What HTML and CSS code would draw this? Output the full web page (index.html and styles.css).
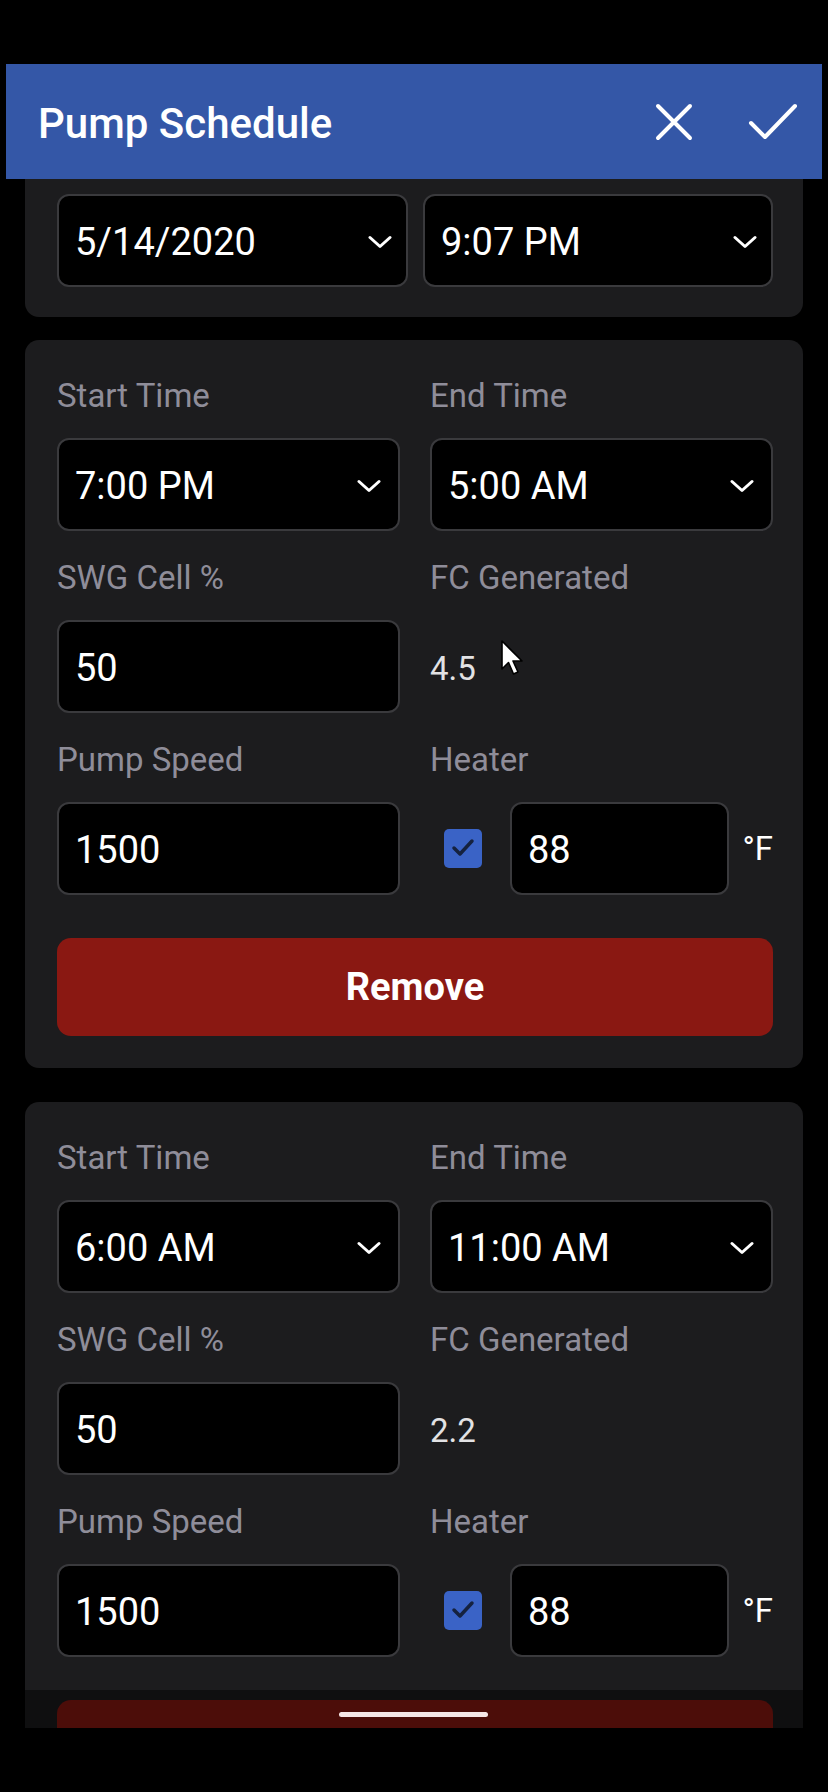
FILE: index.html
```html
<!DOCTYPE html>
<html lang="en">
<head>
    <meta charset="UTF-8">
    <title>Pump Schedule</title>
    <link rel="stylesheet" href="styles.css">
</head>
<body>
    <div class="screen">
        <header class="appbar">
            <h1>Pump Schedule</h1>
            <div class="actions">
                <svg class="icon-close" width="40" height="40" viewBox="0 0 40 40">
                    <path d="M4 4 L36 36 M36 4 L4 36" stroke="#fff" stroke-width="4" stroke-linecap="round" fill="none"/>
                </svg>
                <svg class="icon-check" width="50" height="40" viewBox="0 0 50 40">
                    <path d="M3 21 L17 35 L47 4" stroke="#fff" stroke-width="4" stroke-linecap="round" stroke-linejoin="round" fill="none"/>
                </svg>
            </div>
        </header>

        <main class="scroller">
            <section class="card card-cut">
                <div class="pair">
                    <div class="box select">
                        <span>5/14/2020</span>
                        <svg class="chevron" width="24" height="14" viewBox="0 0 24 14"><path d="M2 2.5 L12 11.5 L22 2.5" stroke="#fff" stroke-width="3" stroke-linecap="round" stroke-linejoin="round" fill="none"/></svg>
                    </div>
                    <div class="box select">
                        <span>9:07 PM</span>
                        <svg class="chevron" width="24" height="14" viewBox="0 0 24 14"><path d="M2 2.5 L12 11.5 L22 2.5" stroke="#fff" stroke-width="3" stroke-linecap="round" stroke-linejoin="round" fill="none"/></svg>
                    </div>
                </div>
            </section>

            <section class="card">
                <div class="fields">
                    <div class="field">
                        <label>Start Time</label>
                        <div class="box select">
                            <span>7:00 PM</span>
                            <svg class="chevron" width="24" height="14" viewBox="0 0 24 14"><path d="M2 2.5 L12 11.5 L22 2.5" stroke="#fff" stroke-width="3" stroke-linecap="round" stroke-linejoin="round" fill="none"/></svg>
                        </div>
                    </div>
                    <div class="field">
                        <label>End Time</label>
                        <div class="box select">
                            <span>5:00 AM</span>
                            <svg class="chevron" width="24" height="14" viewBox="0 0 24 14"><path d="M2 2.5 L12 11.5 L22 2.5" stroke="#fff" stroke-width="3" stroke-linecap="round" stroke-linejoin="round" fill="none"/></svg>
                        </div>
                    </div>
                    <div class="field">
                        <label>SWG Cell %</label>
                        <div class="box">50</div>
                    </div>
                    <div class="field">
                        <label>FC Generated</label>
                        <div class="readout">4.5</div>
                    </div>
                    <div class="field">
                        <label>Pump Speed</label>
                        <div class="box">1500</div>
                    </div>
                    <div class="field">
                        <label>Heater</label>
                        <div class="heater">
                            <span class="checkbox">
                                <svg width="38" height="38" viewBox="0 0 38 38"><path d="M10 19 L16 25 L28 12" stroke="#15223f" stroke-width="3.5" stroke-linecap="round" stroke-linejoin="round" fill="none"/></svg>
                            </span>
                            <div class="box temp">88</div>
                            <span class="unit">°F</span>
                        </div>
                    </div>
                </div>
                <button class="remove" type="button">Remove</button>
            </section>

            <section class="card">
                <div class="fields">
                    <div class="field">
                        <label>Start Time</label>
                        <div class="box select">
                            <span>6:00 AM</span>
                            <svg class="chevron" width="24" height="14" viewBox="0 0 24 14"><path d="M2 2.5 L12 11.5 L22 2.5" stroke="#fff" stroke-width="3" stroke-linecap="round" stroke-linejoin="round" fill="none"/></svg>
                        </div>
                    </div>
                    <div class="field">
                        <label>End Time</label>
                        <div class="box select">
                            <span>11:00 AM</span>
                            <svg class="chevron" width="24" height="14" viewBox="0 0 24 14"><path d="M2 2.5 L12 11.5 L22 2.5" stroke="#fff" stroke-width="3" stroke-linecap="round" stroke-linejoin="round" fill="none"/></svg>
                        </div>
                    </div>
                    <div class="field">
                        <label>SWG Cell %</label>
                        <div class="box">50</div>
                    </div>
                    <div class="field">
                        <label>FC Generated</label>
                        <div class="readout">2.2</div>
                    </div>
                    <div class="field">
                        <label>Pump Speed</label>
                        <div class="box">1500</div>
                    </div>
                    <div class="field">
                        <label>Heater</label>
                        <div class="heater">
                            <span class="checkbox">
                                <svg width="38" height="38" viewBox="0 0 38 38"><path d="M10 19 L16 25 L28 12" stroke="#15223f" stroke-width="3.5" stroke-linecap="round" stroke-linejoin="round" fill="none"/></svg>
                            </span>
                            <div class="box temp">88</div>
                            <span class="unit">°F</span>
                        </div>
                    </div>
                </div>
                <!-- label is below the fold, button only peeks out -->
                <button class="remove" type="button" aria-label="Remove"></button>
            </section>

            <div class="fade"></div>
            <div class="home-bar"></div>
        </main>

        <svg class="cursor" width="26" height="38" viewBox="0 0 26 38">
            <path d="M2 2 L2 30 L8.5 23.5 L13.5 35 L18 33 L13 22 L22 22 Z" fill="#fff" stroke="#000" stroke-width="1.6" stroke-linejoin="round"/>
        </svg>
    </div>
</body>
</html>
```

FILE: styles.css
```css
body {
    margin: 0;
    background: #000;
    font-family: Roboto, "Noto Sans", sans-serif;
}
.screen {
    position: relative;
    width: 828px;
    height: 1792px;
    padding-top: 64px;
    box-sizing: border-box;
    overflow: hidden;
}
.appbar {
    position: relative;
    z-index: 2;
    height: 115px;
    margin: 0 6px;
    padding: 0 24px 0 32px;
    background: #3457a7;
    display: flex;
    align-items: center;
}
.appbar h1 {
    flex: 1;
    margin: 4px 0 0;
    font-size: 42px;
    font-weight: 500;
    color: #fff;
}
.actions {
    display: flex;
    align-items: center;
    gap: 54px;
}
.actions svg {
    display: block;
}
.scroller {
    position: relative;
    height: 1549px;
    overflow: hidden;
}
.card {
    margin: 0 25px 34px;
    padding: 36px 30px 32px 32px;
    background: #1c1c1e;
    border-radius: 14px;
}
.card-cut {
    padding: 15px 30px 30px 32px;
    margin-bottom: 23px;
    border-radius: 0 0 14px 14px;
}
.pair {
    display: grid;
    grid-template-columns: 351px 350px;
    column-gap: 15px;
}
.pair .box {
    padding-right: 14px;
}
.fields {
    display: grid;
    grid-template-columns: 343px 343px;
    column-gap: 30px;
    row-gap: 27px;
}
.field label {
    display: block;
    height: 40px;
    line-height: 40px;
    margin-bottom: 22px;
    font-size: 33px;
    color: #8f8d99;
}
.box {
    height: 93px;
    box-sizing: border-box;
    padding: 3px 17px 0 16px;
    background: #000;
    border: 2px solid #3a3a3d;
    border-radius: 12px;
    display: flex;
    align-items: center;
    justify-content: space-between;
    font-size: 38px;
    color: #fff;
}
.chevron {
    display: block;
    flex: none;
}
.readout {
    height: 93px;
    padding-top: 3px;
    box-sizing: border-box;
    display: flex;
    align-items: center;
    font-size: 33px;
    color: #e2e2e4;
}
.heater {
    display: flex;
    align-items: center;
}
.checkbox {
    width: 38px;
    height: 39px;
    margin-left: 14px;
    background: #3a63c6;
    border-radius: 5px;
}
.checkbox svg {
    display: block;
}
.box.temp {
    width: 224px;
    margin-left: 28px;
}
.unit {
    margin-left: 13px;
    font-size: 33px;
    color: #fff;
}
.remove {
    display: block;
    width: 100%;
    height: 98px;
    margin-top: 43px;
    border: none;
    border-radius: 14px;
    background: #8a1812;
    font-family: Roboto, "Noto Sans", sans-serif;
    font-size: 38px;
    font-weight: 700;
    color: #fff;
}
.fade {
    position: absolute;
    left: 0;
    right: 0;
    bottom: 0;
    height: 38px;
    background: rgba(0, 0, 0, 0.45);
}
.home-bar {
    position: absolute;
    left: 339px;
    bottom: 11px;
    width: 149px;
    height: 5px;
    border-radius: 3px;
    background: #f6e6e6;
}
.cursor {
    position: absolute;
    left: 500px;
    top: 639px;
}
```
